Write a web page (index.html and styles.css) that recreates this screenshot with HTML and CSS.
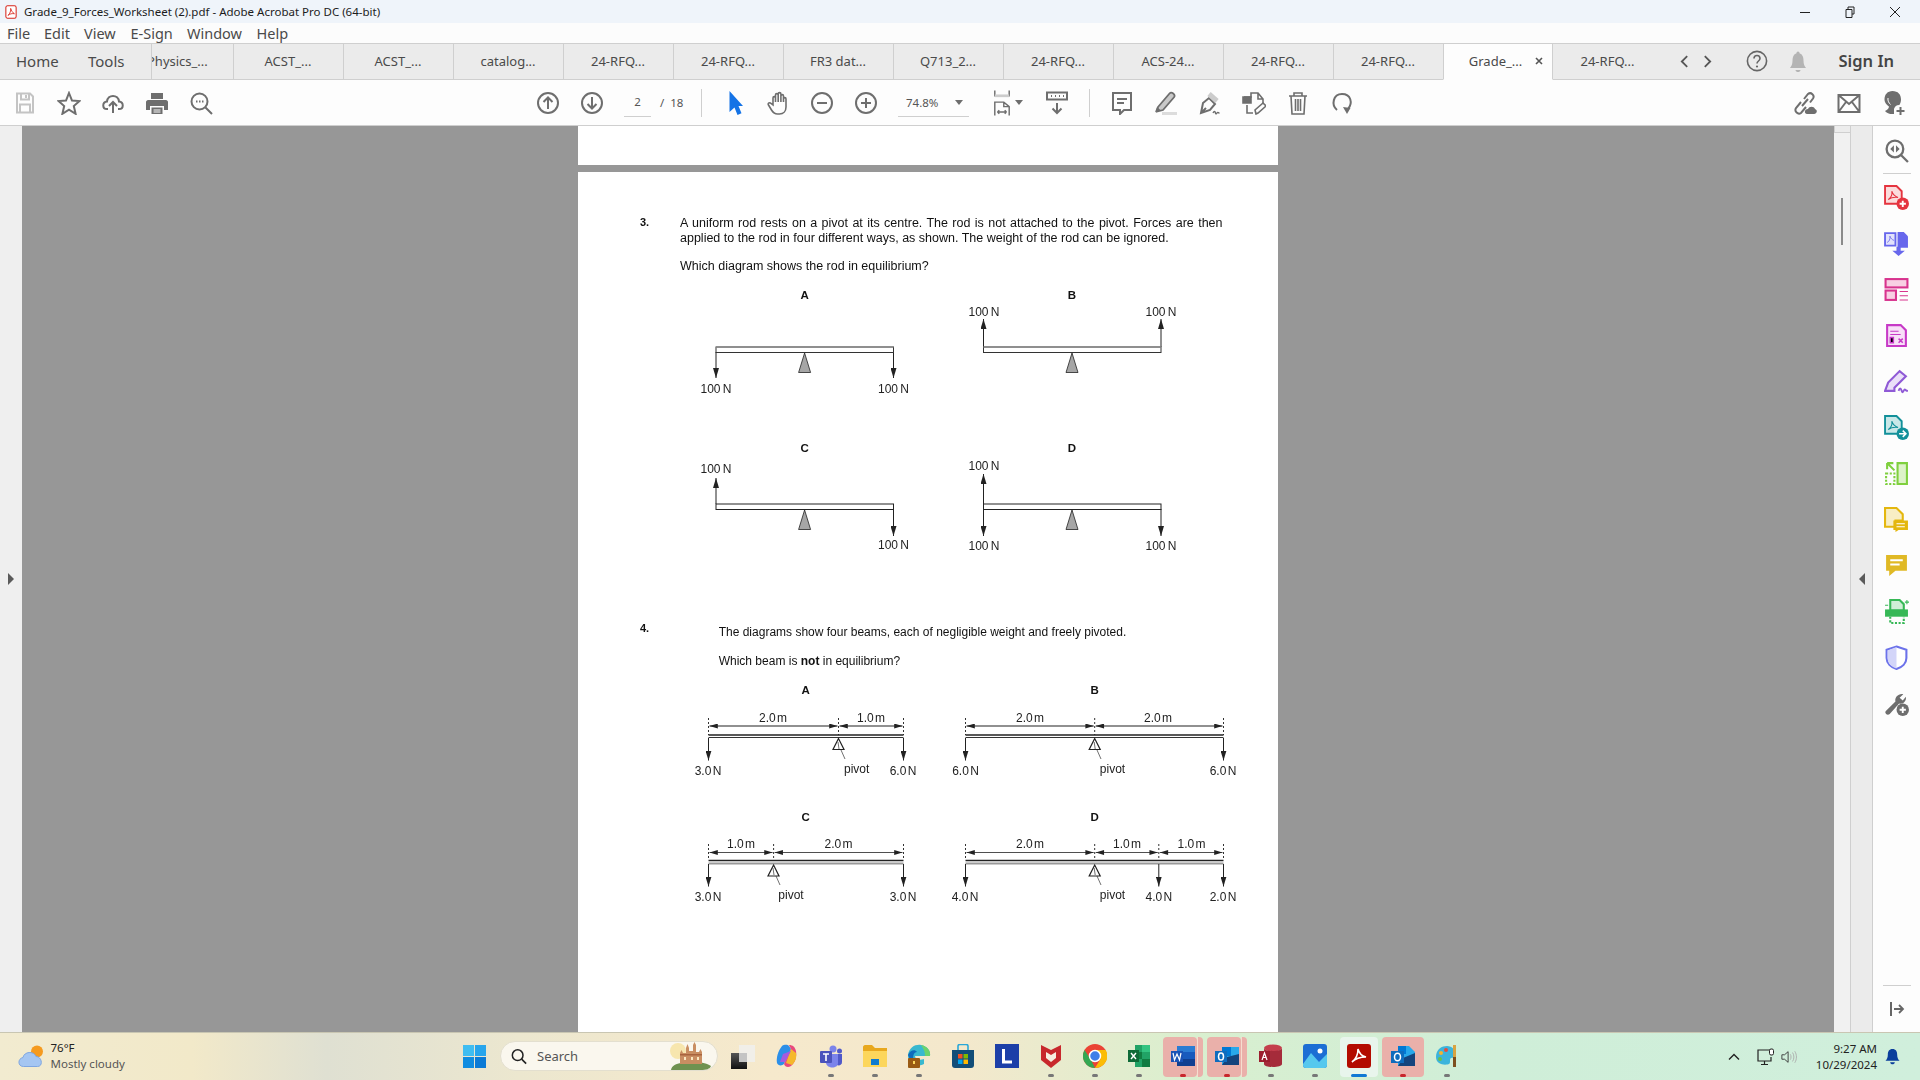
FILE: index.html
```html
<!DOCTYPE html>
<html lang="en">
<head>
<meta charset="utf-8">
<title>Grade_9_Forces_Worksheet (2).pdf - Adobe Acrobat Pro DC (64-bit)</title>
<link rel="stylesheet" href="styles.css">
</head>
<body>
<div class="shell">
  <header class="titlebar">
    <svg class="app-icon" viewBox="0 0 14 16"><rect x="1" y=".8" width="12" height="14.4" rx="2" fill="#fff" stroke="#d8261c" stroke-width="1.2"/><path d="M3.5 12C6 10 7 6 6.6 3.8 7.4 6.5 9 9 11 10 8.5 9.6 5.5 10 3.5 12z" fill="none" stroke="#d8261c"/></svg>
    <span class="title-text">Grade_9_Forces_Worksheet (2).pdf - Adobe Acrobat Pro DC (64-bit)</span>
    <div class="win-controls">
      <svg class="win-btn" viewBox="0 0 12 12"><path d="M1 6.500h10" stroke="#222" fill="none"/></svg>
      <svg class="win-btn" viewBox="0 0 12 12"><path d="M2 3.500h6v8H2zM4 3.500V1h6v7H8" stroke="#222" fill="none"/></svg>
      <svg class="win-btn" viewBox="0 0 12 12"><path d="M1 1l10 10M11 1L1 11" stroke="#222" fill="none"/></svg>
    </div>
  </header>
  <nav class="menubar">
    <span class="menu-item m-file">File</span><span class="menu-item m-edit">Edit</span><span class="menu-item m-view">View</span><span class="menu-item m-esign">E-Sign</span><span class="menu-item m-window">Window</span><span class="menu-item m-help">Help</span>
  </nav>
  <div class="tabbar">
    <span class="home-link">Home</span>
    <span class="tools-link">Tools</span>
    <div class="tab tab-clipped"><span>Physics_...</span></div>
    <div class="tab">ACST_...</div>
    <div class="tab">ACST_...</div>
    <div class="tab">catalog...</div>
    <div class="tab">24-RFQ...</div>
    <div class="tab">24-RFQ...</div>
    <div class="tab">FR3 dat...</div>
    <div class="tab">Q713_2...</div>
    <div class="tab">24-RFQ...</div>
    <div class="tab">ACS-24...</div>
    <div class="tab">24-RFQ...</div>
    <div class="tab">24-RFQ...</div>
    <div class="tab tab-active"><span>Grade_...</span><svg class="tab-x" viewBox="0 0 8 8"><path d="M1 1l6 6M7 1L1 7" stroke="#555" stroke-width="1.6" fill="none"/></svg></div>
    <div class="tab">24-RFQ...</div>
    <svg class="tab-nav tn-prev" viewBox="0 0 10 14"><path d="M8 1L2 7l6 6" stroke="#555" stroke-width="2" fill="none"/></svg>
    <svg class="tab-nav tn-next" viewBox="0 0 10 14"><path d="M2 1l6 6-6 6" stroke="#555" stroke-width="2" fill="none"/></svg>
    <svg class="help-icon" viewBox="0 0 22 22"><circle cx="11" cy="11" r="9.6" fill="none" stroke="#666" stroke-width="1.6"/><path d="M8 8.500c0-4 6-4 6 0 0 2.500-3 2.500-3 5" fill="none" stroke="#666" stroke-width="1.6"/><circle cx="11" cy="16.500" r="1.100" fill="#666"/></svg>
    <svg class="bell-icon" viewBox="0 0 18 24"><path d="M9 1.500c1 0 1.500.8 1.500 1.800 3 1 4 3.700 4 7.200 0 4 1 5.500 2.500 7.500H1c1.500-2 2.500-3.500 2.500-7.500 0-3.500 1-6.200 4-7.200C7.500 2.300 8 1.500 9 1.500zM6.500 20h5c-.3 2.700-4.700 2.700-5 0z" fill="#b4b4b4"/></svg>
    <span class="signin">Sign In</span>
  </div>
  <div class="toolbar">
    <div class="tb-group g-file">
      <span class="tb-btn"><svg viewBox="0 0 24 24" class="ico ico-light"><path d="M4 2.500h13l3 3v16H4zM8 2.500v6h8v-6M13 4v3M7 21.500v-8h10v8"/></svg></span>
      <span class="tb-btn"><svg viewBox="0 0 24 24" class="ico"><path d="M12 2l3 7.500 7.500.6-5.700 5 1.800 7.700L12 18.600l-6.600 4.200 1.800-7.700-5.700-5L9 9.500z"/></svg></span>
      <span class="tb-btn"><svg viewBox="0 0 24 24" class="ico"><path d="M7 18H6C1 18 1 11 6 10.500 6.500 3 17.500 3 18 10.500c5 .5 5 7.500 0 7.500h-1M12 22V11M8 15l4-4 4 4"/></svg></span>
      <span class="tb-btn"><svg viewBox="0 0 24 24" class="ico-fill"><path d="M6 2h12v6H6zM3 9h18c1 0 2 1 2 2v8h-4v-4H5v4H1v-8c0-1 1-2 2-2zM6.500 16.500h11V23h-11zM8.500 18.500v1h7v-1zM8.500 20.500v1h7v-1z" fill-rule="evenodd"/></svg></span>
      <span class="tb-btn"><svg viewBox="0 0 24 24" class="ico"><circle cx="10.500" cy="10.500" r="8"/><path d="M16.500 16.500L23 23M7 10.500h1.500M10 10.500h1.500M13 10.500h1.500"/></svg></span>
    </div>
    <span class="tb-btn g-nav"><svg viewBox="0 0 24 24" class="ico"><circle cx="12" cy="12" r="10"/><path d="M12 18V6.500M7.500 11L12 6.500l4.500 4.500"/></svg></span>
    <span class="tb-btn"><svg viewBox="0 0 24 24" class="ico"><circle cx="12" cy="12" r="10"/><path d="M12 6v11.500M7.500 13l4.500 4.500 4.500-4.500"/></svg></span>
    <span class="page-input">2</span>
    <span class="page-total">/&nbsp;&nbsp;18</span>
    <span class="tb-sep sep-a"></span>
    <span class="tb-btn btn-after-sep"><svg viewBox="0 0 24 24"><path d="M6.500 0v21l5-4.500L14.500 24l4-1.700-3-7.300H20z" fill="#1473e6"/></svg></span>
    <span class="tb-btn"><svg viewBox="0 0 24 24" class="ico ico-thin"><path d="M6 14V7c0-1.800 2.500-1.800 2.500 0v4V4c0-1.800 2.700-1.800 2.700 0v7V3c0-1.800 2.700-1.800 2.700 0v8V5c0-1.800 2.600-1.800 2.600 0v6-3c0-1.800 2.500-1.800 2.500 0v8c0 4-2.500 7-6.500 7h-2c-3 0-4.500-1.500-6-4l-3-5c-1-1.800 1.200-3 2.500-1.500z"/></svg></span>
    <span class="tb-btn btn-minus"><svg viewBox="0 0 24 24" class="ico"><circle cx="12" cy="12" r="10"/><path d="M7 12h10"/></svg></span>
    <span class="tb-btn"><svg viewBox="0 0 24 24" class="ico"><circle cx="12" cy="12" r="10"/><path d="M7 12h10M12 7v10"/></svg></span>
    <div class="zoom-select"><span>74.8%</span><i class="caret"></i></div>
    <div class="fit-btn"><svg viewBox="0 0 20 28" class="ico ico-thin"><path d="M2 0v6h16V0"/><path d="M2 6h16" stroke="#ccc" stroke-width="3"/><path d="M2 28V13h10l6 5v10M12 13v5h6M5 24h10M5 24l2-2M5 24l2 2M15 24l-2-2M15 24l-2 2"/></svg><i class="caret"></i></div>
    <span class="tb-btn btn-dl"><svg viewBox="0 0 24 24" class="ico"><path d="M2 1.500h20v7H2zM12 12v10M7.500 17.500L12 22l4.500-4.500"/><path d="M6 5h1M10 5h1M14 5h1M18 5h1"/></svg></span>
    <span class="tb-sep sep-b"></span>
    <span class="tb-btn btn-comment"><svg viewBox="0 0 24 24" class="ico"><path d="M3 2h18v17h-7l-4 4v-4H3zM7 8h10M7 12h7"/></svg></span>
    <span class="tb-btn"><svg viewBox="0 0 24 24"><path d="M4 16L15.500 2.500c2-2.300 6.500 1 4.500 3.800L9 19l-6 1.500z" fill="#c9c9c9" stroke="#6e6e6e" stroke-width="1.800"/><path d="M3 16l-2 5 6-1.500z" fill="#6e6e6e"/><path d="M8 21h15v3H8z" fill="#dcdcdc"/></svg></span>
    <span class="tb-btn"><svg viewBox="0 0 24 24" class="ico"><path d="M3 22l2-10 6-5 6 6-5 6zM3 22l5-5"/><path d="M11 3l8 7" stroke="#ccc" stroke-width="5"/><path d="M15 22c1-2 2-2 2.500 0s1.500 0 2-.5 1 .5 2 .5" stroke-width="1.400"/></svg></span>
    <span class="tb-btn"><svg viewBox="0 0 24 24" class="ico ico-thin"><path d="M2 6h7V2h7l5 6v4M16 2v6h5M5 14v8h6"/><path d="M14 23l-1-4 8-7 3 3-8 7z"/><path d="M1 6h8v6H1z" fill="#6e6e6e"/></svg></span>
    <span class="tb-btn"><svg viewBox="0 0 24 24" class="ico ico-thin"><path d="M3 5h18M8 5V2h8v3M5 5l1 18h12l1-18M9.500 8v12M12 8v12M14.500 8v12"/></svg></span>
    <span class="tb-btn"><svg viewBox="0 0 24 24" class="ico"><path d="M7 19C1 14 3 3 12 3s11 9 6 15"/><path d="M13 16l7.500 1-3.500 6z" fill="#6e6e6e" stroke="none"/></svg></span>
    <div class="tb-group g-right">
      <span class="tb-btn"><svg viewBox="0 0 24 24" class="ico"><path d="M11 8l4-5c3-2.500 7 1.500 5 4.500l-3 4M13 16l-5 6c-3 2-7-1.500-5-5l5-6M9 15l6-7"/><path d="M14 23c-3 0-3-5 1-5 1-3 6-3 7 0 3 1 2 5-1 5z" fill="#6e6e6e" stroke="none"/></svg></span>
      <span class="tb-btn"><svg viewBox="0 0 24 24" class="ico"><path d="M1.500 4h21v17h-21zM1.500 4L12 13 22.500 4M1.500 21L9 11M22.500 21L15 11"/></svg></span>
      <span class="tb-btn"><svg viewBox="0 0 24 24"><path d="M11.500 0C17 0 20 3.500 20 8.500c0 2-.6 4-1.600 5.500-2.400-.2-4.900 1.500-5.400 4v5c-3.500.5-7.500-.8-9-3 1.800-1 4-2.500 4-4.500C6 14 3.500 12 3.500 8.500 3.500 3.500 6.500 0 11.500 0z" fill="#6e6e6e"/><path d="M7 7c-.5 3 1 5 2.500 6.500" stroke="#fff" fill="none"/><path d="M19.500 16v8M15.500 20h8" stroke="#6e6e6e" stroke-width="2"/></svg></span>
    </div>
  </div>

  <div class="workspace">
    <aside class="left-rail"><i class="tri tri-right"></i></aside>
    <main class="viewer">
      <div class="page page-prev"></div>
      <article class="page page-cur">
        <div class="q-head q3">
          <span class="q-num">3.</span>
          <div class="q-body">
            <p class="justified">A uniform rod rests on a pivot at its centre. The rod is not attached to the pivot. Forces are then applied to the rod in four different ways, as shown. The weight of the rod can be ignored.</p>
            <p>Which diagram shows the rod in equilibrium?</p>
          </div>
        </div>
        <svg class="fig fig3" viewBox="578 285 700 270">
          <defs>
            <marker id="ah" viewBox="0 0 10 6" refX="10" refY="3" markerWidth="10" markerHeight="6" orient="auto" markerUnits="userSpaceOnUse"><path d="M0 0L10 3 0 6z" fill="#222"/></marker>
            <marker id="dh" viewBox="0 0 10 6" refX="10" refY="3" markerWidth="10" markerHeight="5" orient="auto-start-reverse" markerUnits="userSpaceOnUse"><path d="M0 0L10 3 0 6z" fill="#222"/></marker>
          </defs>
          <text class="lb" x="804.600" y="299">A</text>
          <text class="lb" x="1072" y="299">B</text>
          <text class="lb" x="804.600" y="452">C</text>
          <text class="lb" x="1072" y="452">D</text>

          <line class="fa" x1="716" y1="352" x2="716" y2="378"/><line class="fa" x1="893.500" y1="352" x2="893.500" y2="378"/>
          <rect class="rod" x="716" y="347" width="177.500" height="5.500"/><path class="rod-top" d="M716 347h177.500"/>
          <polygon class="wedge" points="804.600,353 798.600,372.500 810.600,372.500"/>
          <text class="tx" x="716" y="392.500">100 N</text><text class="tx" x="893.500" y="392.500">100 N</text>

          <line class="fa" x1="983.500" y1="347" x2="983.500" y2="319"/><line class="fa" x1="1161" y1="347" x2="1161" y2="319"/>
          <rect class="rod" x="983.500" y="347" width="177.500" height="5.500"/><path class="rod-top" d="M983.500 347h177.500"/>
          <polygon class="wedge" points="1072,353 1066,372.500 1078,372.500"/>
          <text class="tx" x="984" y="315.500">100 N</text><text class="tx" x="1161" y="315.500">100 N</text>

          <line class="fa" x1="716" y1="504" x2="716" y2="478"/><line class="fa" x1="893.500" y1="509" x2="893.500" y2="536"/>
          <rect class="rod rod-dark" x="716" y="504" width="177.500" height="5.500"/>
          <polygon class="wedge" points="804.600,510 798.600,529.500 810.600,529.500"/>
          <text class="tx" x="716" y="473">100 N</text><text class="tx" x="893.500" y="549">100 N</text>

          <line class="fa" x1="983.500" y1="504" x2="983.500" y2="474"/><line class="fa" x1="983.500" y1="509" x2="983.500" y2="536"/><line class="fa" x1="1161" y1="509" x2="1161" y2="536"/>
          <rect class="rod rod-dark" x="983.500" y="504" width="177.500" height="5.500"/>
          <polygon class="wedge" points="1072,510 1066,529.500 1078,529.500"/>
          <text class="tx" x="984" y="470">100 N</text><text class="tx" x="984" y="549.500">100 N</text><text class="tx" x="1161" y="549.500">100 N</text>
        </svg>

        <div class="q-head q4">
          <span class="q-num">4.</span>
          <div class="q-body">
            <p>The diagrams show four beams, each of negligible weight and freely pivoted.</p>
            <p>Which beam is <b>not</b> in equilibrium?</p>
          </div>
        </div>
        <svg class="fig fig4" viewBox="578 685 700 220">
          <text class="lb" x="805.700" y="694">A</text><text class="lb" x="1094.700" y="694">B</text>
          <text class="lb" x="805.700" y="820.500">C</text><text class="lb" x="1094.700" y="820.500">D</text>

          <path class="dots" d="M708.500 718v17M838.500 718v17M903.500 718v17"/>
          <line class="dim" x1="709.500" y1="726" x2="837.500" y2="726"/><line class="dim" x1="839.500" y1="726" x2="902.500" y2="726"/>
          <text class="tx tx-m" x="773" y="721.500">2.0 m</text><text class="tx tx-m" x="871" y="721.500">1.0 m</text>
          <path class="bm" d="M708.500 735h195"/><path class="bm2" d="M708.500 737.500h195"/>
          <line class="fa" x1="708.500" y1="738" x2="708.500" y2="760.500"/><line class="fa" x1="903.500" y1="738" x2="903.500" y2="760.500"/>
          <polygon class="tri-w" points="838.500,738.500 833,749.500 844,749.500"/><path class="thin" d="M838 742l1 7M841 750l4 9"/>
          <text class="tx tx-m" x="708" y="774.500">3.0 N</text><text class="tx" x="856.700" y="773">pivot</text><text class="tx tx-m" x="903" y="774.500">6.0 N</text>

          <path class="dots" d="M965.500 718v17M1094.700 718v17M1223.500 718v17"/>
          <line class="dim" x1="966.500" y1="726" x2="1093.700" y2="726"/><line class="dim" x1="1095.700" y1="726" x2="1222.500" y2="726"/>
          <text class="tx tx-m" x="1030" y="721.500">2.0 m</text><text class="tx tx-m" x="1158" y="721.500">2.0 m</text>
          <path class="bm" d="M965.500 735h258"/><path class="bm2" d="M965.500 737.500h258"/>
          <line class="fa" x1="965.500" y1="738" x2="965.500" y2="760.500"/><line class="fa" x1="1223.500" y1="738" x2="1223.500" y2="760.500"/>
          <polygon class="tri-w" points="1094.700,738.500 1089.200,749.500 1100.200,749.500"/><path class="thin" d="M1094.200 742l1 7M1097 750l4 9"/>
          <text class="tx tx-m" x="965.500" y="774.500">6.0 N</text><text class="tx" x="1112.500" y="773">pivot</text><text class="tx tx-m" x="1223" y="774.500">6.0 N</text>

          <path class="dots" d="M708.500 844v16M773.600 844v16M903.500 844v16"/>
          <line class="dim dim-thin" x1="709.500" y1="852.500" x2="772.600" y2="852.500"/><line class="dim dim-thin" x1="774.600" y1="852.500" x2="902.500" y2="852.500"/>
          <text class="tx tx-m" x="741" y="848">1.0 m</text><text class="tx tx-m" x="838.500" y="848">2.0 m</text>
          <path class="bm" d="M708.500 860.500h195"/><path class="bm3" d="M708.500 863.500h195"/>
          <line class="fa" x1="708.500" y1="864" x2="708.500" y2="886.500"/><line class="fa" x1="903.500" y1="864" x2="903.500" y2="886.500"/>
          <polygon class="tri-w" points="773.600,865 768,876 779,876"/><path class="thin" d="M773 868l1 7M776 876l4 9"/>
          <text class="tx tx-m" x="708" y="900.500">3.0 N</text><text class="tx" x="791" y="899">pivot</text><text class="tx tx-m" x="903" y="900.500">3.0 N</text>

          <path class="dots" d="M965.500 844v16M1094.700 844v16M1158.800 844v16M1223.500 844v16"/>
          <line class="dim dim-thin" x1="966.500" y1="852.500" x2="1093.700" y2="852.500"/><line class="dim dim-thin" x1="1095.700" y1="852.500" x2="1157.800" y2="852.500"/><line class="dim dim-thin" x1="1159.800" y1="852.500" x2="1222.500" y2="852.500"/>
          <text class="tx tx-m" x="1030" y="848">2.0 m</text><text class="tx tx-m" x="1127" y="848">1.0 m</text><text class="tx tx-m" x="1191.600" y="848">1.0 m</text>
          <path class="bm" d="M965.500 860.500h258"/><path class="bm3" d="M965.500 863.500h258"/>
          <line class="fa" x1="965.500" y1="864" x2="965.500" y2="886.500"/><line class="fa" x1="1158.800" y1="864" x2="1158.800" y2="886.500"/><line class="fa" x1="1223.500" y1="864" x2="1223.500" y2="886.500"/>
          <polygon class="tri-w" points="1094.700,865 1089.200,876 1100.200,876"/><path class="thin" d="M1094.200 868l1 7M1097 876l4 9"/>
          <text class="tx tx-m" x="965" y="900.500">4.0 N</text><text class="tx" x="1112.500" y="899">pivot</text><text class="tx tx-m" x="1158.800" y="900.500">4.0 N</text><text class="tx tx-m" x="1223" y="900.500">2.0 N</text>
        </svg>
      </article>
    </main>
    <div class="scroll-col"><span class="scroll-cap"></span><span class="scroll-thumb"></span></div>
    <div class="collapse-col"><i class="tri tri-left"></i></div>
    <aside class="tools-rail">
      <span class="tool"><svg viewBox="0 0 24 24" fill="none" stroke="#6e6e6e" stroke-width="2.200"><circle cx="10.500" cy="10.500" r="8"/><path d="M16.500 16.500L23 23"/><path d="M9.500 7v7L6 10.500zM11.500 7v7L15 10.500z" fill="#6e6e6e" stroke="none"/></svg></span>
      <span class="rail-line"></span>
      <span class="tool"><svg viewBox="0 0 24 24"><path d="M1 1h11l5 5v12H1z" fill="#fbdcdc" stroke="#e5343f" stroke-width="1.800"/><path d="M4 14c3-2 4-5 3.500-8 1 3 3 5 6 6-3-.5-6.500 0-9.500 2z" fill="none" stroke="#e5343f"/><circle cx="18" cy="18" r="6" fill="#e5343f"/><path d="M18 15v6M15 18h6" stroke="#fff" stroke-width="1.800"/></svg></span>
      <span class="tool"><svg viewBox="0 0 24 24"><path d="M1 2h10v12H1z" fill="#e2e2fb" stroke="#6767ec" stroke-width="1.800"/><path d="M3 11c2-1 3-3 2.700-6 .8 2 2 3.500 4 4" fill="none" stroke="#6767ec" stroke-width=".8"/><path d="M13 1h6l4 4v11H13z" fill="#6767ec"/><path d="M12 15v4H8l6 5 6-5h-4v-4z" fill="#6767ec"/></svg></span>
      <span class="tool"><svg viewBox="0 0 24 24"><rect x="1.500" y="2" width="21" height="8" fill="#f8cfe3" stroke="#d8348e" stroke-width="2"/><rect x="1.500" y="13" width="10" height="9" fill="#f8cfe3" stroke="#d8348e" stroke-width="2"/><path d="M15 14h8M15 18h8M15 22h8" stroke="#d8348e"/></svg></span>
      <span class="tool"><svg viewBox="0 0 24 24"><path d="M3 2h13l5 5v15H3z" fill="#f8e0f8" stroke="#c73ac7" stroke-width="2"/><path d="M6 8h8M6 11h10" stroke="#c73ac7"/><path d="M6 14h3v5H6zM14 15l4 4M18 15l-4 4" stroke="#c73ac7" stroke-width="1.400"/></svg></span>
      <span class="tool"><svg viewBox="0 0 24 24"><path d="M1 21l3-8L15 2l6 5-11 11v3z" fill="#eadff8" stroke="#8f5ad6" stroke-width="2"/><path d="M14 21c1-3 2-3 3 0s1.500 0 2.500-1 1 1 3.500 1" fill="none" stroke="#8f5ad6" stroke-width="1.800"/></svg></span>
      <span class="tool"><svg viewBox="0 0 24 24"><path d="M1 1h11l5 5v12H1z" fill="#c9e8e8" stroke="#12909a" stroke-width="1.800"/><path d="M4 14c3-2 4-5 3.500-8 1 3 3 5 6 6-3-.5-6.500 0-9.500 2z" fill="none" stroke="#12909a"/><circle cx="18" cy="18" r="6" fill="#12909a"/><path d="M14.500 18h6M18 15l3 3-3 3" stroke="#fff" stroke-width="1.500" fill="none"/></svg></span>
      <span class="tool"><svg viewBox="0 0 24 24"><path d="M13 2h9v20h-9z" fill="#ddf3c8" stroke="#7fd03e" stroke-width="2"/><path d="M2 12h8v10H2z" fill="none" stroke="#7fd03e" stroke-width="2" stroke-dasharray="2 1.500"/><path d="M10 9l-7-7M3 2v6M3 2h6" stroke="#7fd03e" stroke-width="2"/></svg></span>
      <span class="tool"><svg viewBox="0 0 24 24"><path d="M1 1h11l6 6v6h-7v6H1z" fill="#f8eec4" stroke="#e4b70e" stroke-width="2"/><path d="M9 13h14v9h-9l-3 2v-2H9z" fill="#e4b70e"/><path d="M12 16h8M12 19h8" stroke="#fff"/></svg></span>
      <span class="tool"><svg viewBox="0 0 24 24"><path d="M2 2h20v15H11l-6 5v-5H2z" fill="#e0b925"/><path d="M6 7h12M6 11h9" stroke="#fff" stroke-width="1.800"/></svg></span>
      <span class="tool"><svg viewBox="0 0 24 24"><path d="M6 1h9l4 4v6H6z" fill="#cfeed6" stroke="#36b856" stroke-width="2"/><path d="M1 10h22v7H1z" fill="#36b856"/><path d="M6 17v6h13v-6" fill="none" stroke="#36b856" stroke-width="2" stroke-dasharray="2 1.500"/><path d="M20 3h4M22 1v4M1 6h3" stroke="#36b856"/></svg></span>
      <span class="tool"><svg viewBox="0 0 24 24"><path d="M12 1.500l9.500 3v8c0 5-4 9-9.500 10.500C6.500 21.500 2.500 17.500 2.500 12.500v-8z" fill="#fff" stroke="#6c72ea" stroke-width="2"/><path d="M12 2v20.500C6.500 21 3.500 17.500 3.500 12.500v-7.300z" fill="#d3d5f9"/></svg></span>
      <span class="tool"><svg viewBox="0 0 24 24"><path d="M2 22c-1-1-1-2 0-3l9-9c-1-4 3-8 7.500-7L15 6.500 18 9l3-3.500c.8 4-2.500 7.500-6.500 6.500l-9 10c-1 1-2.500 1-3.500 0z" fill="#6e6e6e"/><circle cx="18" cy="18" r="6" fill="#6e6e6e"/><path d="M18 15v6M15 18h6" stroke="#fff" stroke-width="1.800"/></svg></span>
      <span class="rail-line rail-line-end"></span>
      <span class="tool tool-small"><svg viewBox="0 0 16 16"><path d="M2 1v14" stroke="#666" stroke-width="2"/><path d="M5 8h9M10 4l4 4-4 4" stroke="#666" stroke-width="1.800" fill="none"/></svg></span>
    </aside>
  </div>

  <footer class="taskbar">
    <div class="weather">
      <svg class="weather-icon" viewBox="0 0 26 22"><circle cx="19" cy="6.500" r="6" fill="#f59a1f"/><path d="M5.500 21.500c-6 0-6-8-.5-9 1-6 11-7 13-1 6 0 7.500 10 1.500 10z" fill="#a5c6f2" stroke="#7fa6e0"/></svg>
      <div class="weather-text"><span class="w-temp">76°F</span><span class="w-desc">Mostly cloudy</span></div>
    </div>
    <svg class="start" viewBox="0 0 23 23"><rect width="11" height="11" fill="#3fbdf1"/><rect x="12" width="11" height="11" fill="#27a5ec"/><rect y="12" width="11" height="11" fill="#0f8ce0"/><rect x="12" y="12" width="11" height="11" fill="#0a7ad6"/></svg>
    <div class="searchbox">
      <svg class="search-glass" viewBox="0 0 18 18"><circle cx="7.500" cy="7.500" r="6" fill="none" stroke="#222" stroke-width="1.700"/><path d="M12 12l5 5" stroke="#222" stroke-width="1.800"/></svg>
      <span class="search-text">Search</span>
      <svg class="castle" viewBox="0 0 42 30"><circle cx="8" cy="10" r="8" fill="#f7e6ae"/><path d="M1 29c1-6 9-8 15-6 6-3 20-2 25 2-1 3-5 4-10 4z" fill="#6f9250"/><path d="M10 23V12l1.500-3 1.500 3h3V7l1.500-4L19 7v3h4V4l1.500-3L26 4v7h3l1.500-3 1.500 3v12z" fill="#c98e62"/><path d="M10 13h22v1.500H10z" fill="#a8643e"/><path d="M14 16h2v3h-2zM21 16h2v3h-2zM27 16h2v3h-2z" fill="#fbe7c0"/></svg>
    </div>
    <svg class="taskview" viewBox="0 0 24 24"><defs><linearGradient id="tv" x1="0" y1="0" x2="0" y2="1"><stop offset="0" stop-color="#555"/><stop offset="1" stop-color="#111"/></linearGradient></defs><rect x="8" width="16" height="17" fill="#f1efe9"/><rect y="8" width="16" height="16" fill="url(#tv)"/><rect x="8" y="8" width="8" height="9" fill="#c4c4c4"/></svg>
    <div class="apps">
      <div class="app"><svg viewBox="0 0 24 24"><path d="M7 2c3-2 6-1 7 0l2 3-7 15c-2 2-6 2-7-1-1-5 1-12 5-17z" fill="#2c8fe8"/><path d="M14 1c4 0 6 2 7 6 1 6-1 12-5 15-3 2-6 1-7-2l7-15z" fill="#e8497c"/><path d="M16 5l5 4c1 5-1 9-4 12l-6-2z" fill="#f5b82c"/><path d="M8 10l8-3-6 11H5z" fill="#a35be0"/></svg></div>
      <div class="app"><svg viewBox="0 0 24 24"><circle cx="14" cy="5" r="3.500" fill="#7b83eb"/><circle cx="20.500" cy="7" r="2.500" fill="#5059c9"/><path d="M16 10h7v8c0 3-3 4-5 3z" fill="#5059c9"/><path d="M7 10h12v9c0 6-11 6-12 0z" fill="#7b83eb"/><rect x="1" y="7" width="12" height="12" rx="1" fill="#4b53bc"/><path d="M4 10h6M7 10v7" stroke="#fff" stroke-width="1.600"/></svg><i class="dot"></i></div>
      <div class="app"><svg viewBox="0 0 24 24"><path d="M0 3c0-1 1-2 2-2h7l3 3h12v19H0z" fill="#e8a81e"/><path d="M0 7h24v16H0z" fill="#fcd65c"/><path d="M8 15h8v6H8z" fill="#0f7bd0"/></svg><i class="dot"></i></div>
      <div class="app"><svg viewBox="0 0 24 24"><path d="M1 11C2 3 9 0 14 1c6 1 10 6 9 11H8c0 3 4 5 9 3v5c-8 4-16 1-16-9z" fill="#39b8cf"/><path d="M14 1c6 1 10 6 9 11h-5c0-5-2-8-4-11z" fill="#6cd36c"/><path d="M1 11c2-5 7-6 9-3-3 0-5 4-3 10-3-1-5-4-6-7z" fill="#0f6cbd"/><rect x="1" y="14" width="12" height="10" rx="1" fill="#9a5b14"/><rect x="6" y="17" width="2" height="3" fill="#fcd65c"/></svg><i class="dot"></i></div>
      <div class="app"><svg viewBox="0 0 24 24"><path d="M7 6V2c0-1 1-1.500 2-1.500h6c1 0 2 .5 2 1.500v4" fill="none" stroke="#2aa7d8" stroke-width="1.600"/><path d="M1 6h22v15c0 2-1 3-3 3H4c-2 0-3-1-3-3z" fill="#124d78"/><rect x="7" y="10" width="4.500" height="4.500" fill="#f25022"/><rect x="12.500" y="10" width="4.500" height="4.500" fill="#7fba00"/><rect x="7" y="15.500" width="4.500" height="4.500" fill="#00a4ef"/><rect x="12.500" y="15.500" width="4.500" height="4.500" fill="#ffb900"/></svg></div>
      <div class="app"><svg viewBox="0 0 24 24"><rect width="24" height="24" fill="#1c3fa8"/><path d="M8.500 5v13H17" fill="none" stroke="#fff" stroke-width="3"/></svg></div>
      <div class="app"><svg viewBox="0 0 24 24"><path d="M2 1l10 5 10-5v15l-10 8-10-8z" fill="#c8282c"/><path d="M7 8l5 3 5-3v6l-5 4-5-4z" fill="#f6eee0"/></svg><i class="dot"></i></div>
      <div class="app"><svg viewBox="0 0 24 24"><circle cx="12" cy="12" r="12" fill="#ea4335"/><path d="M12 24A12 12 0 0 1 1.600 6L8 16z" fill="#34a853"/><path d="M12 6h10.600A12 12 0 0 1 12 24l5.500-9z" fill="#fbbc05"/><circle cx="12" cy="12" r="5.500" fill="#3f7fe8" stroke="#fff" stroke-width="1.500"/></svg><i class="dot"></i></div>
      <div class="app"><svg viewBox="0 0 24 24"><path d="M8 1h15v22H8z" fill="#21a366"/><path d="M15 1h8v7h-8z" fill="#33c481"/><path d="M15 15h8v8h-8z" fill="#107c41"/><path d="M8 8h7v7H8z" fill="#107c41"/><rect x="1" y="6" width="11" height="12" fill="#0e6a37"/><path d="M4 9l5 6M9 9l-5 6" stroke="#fff" stroke-width="1.400"/></svg><i class="dot"></i></div>
      <div class="app app-alert"><span class="stack"></span><svg viewBox="0 0 24 24"><path d="M6 2h18v20H6z" fill="#2b7cd3"/><path d="M6 8h18v7H6z" fill="#185abd"/><path d="M6 15h18v7H6z" fill="#103f91"/><rect y="7" width="12" height="11" fill="#1a52b5"/><path d="M2 9l1.500 7L6 10l2.500 6L10 9" fill="none" stroke="#fff" stroke-width="1.200"/></svg><i class="dot dot-red"></i></div>
      <div class="app app-alert"><span class="stack"></span><svg viewBox="0 0 24 24"><path d="M7 3h17v18H7z" fill="#28a8ea"/><path d="M7 3h9v9H7z" fill="#0078d4"/><path d="M12 13l12-3v11H7z" fill="#14447d"/><rect y="7" width="12" height="11" fill="#0f6cbd"/><ellipse cx="6" cy="12.500" rx="2.500" ry="3.500" fill="none" stroke="#fff" stroke-width="1.500"/></svg><i class="dot dot-red"></i></div>
      <div class="app"><svg viewBox="0 0 24 24"><ellipse cx="14" cy="4" rx="9" ry="3.500" fill="#c43e4c"/><path d="M5 4v16c0 4 18 4 18 0V4c0 4-18 4-18 0z" fill="#a52b3a"/><rect y="7" width="11" height="11" fill="#9c1e2e"/><path d="M3 16l2.500-7L8 16M4 13.500h3" fill="none" stroke="#fff" stroke-width="1.200"/></svg><i class="dot"></i></div>
      <div class="app"><svg viewBox="0 0 24 24"><path d="M3 0h18c2 0 3 1 3 3v18c0 2-1 3-3 3H3c-2 0-3-1-3-3V3c0-2 1-3 3-3z" fill="#1c6ed4"/><path d="M0 20L8 9l8 9 8-8v11c0 2-1 3-3 3H3c-2 0-3-1-3-3z" fill="#56c8ee"/><circle cx="17" cy="7" r="2.500" fill="#fff"/></svg><i class="dot"></i></div>
      <div class="app app-active"><svg viewBox="0 0 24 24"><rect width="24" height="24" rx="3" fill="#b30b00"/><path d="M5 18c4-3 6-8 6-13 1 4 4 7 8 8-4 0-10 1-14 5z" fill="none" stroke="#fff" stroke-width="1.600"/></svg><i class="dot dot-blue"></i></div>
      <div class="app app-alert app-o2"><svg viewBox="0 0 24 24"><path d="M7 2h11l6 6v14H7z" fill="#28a8ea"/><path d="M7 2h8v8H7z" fill="#0078d4"/><path d="M12 14l12-5v13H7z" fill="#14447d"/><rect y="7" width="13" height="12" fill="#0f6cbd"/><ellipse cx="6.500" cy="13" rx="3" ry="3.800" fill="none" stroke="#fff" stroke-width="1.500"/></svg><i class="dot dot-red"></i></div>
      <div class="app"><svg viewBox="0 0 24 24"><path d="M1 13C1 5 7 2 12 2s9 4 9 9c0 4-3 2-5 3s0 5-2 6-13 2-13-7z" fill="#3cb4dc"/><circle cx="6" cy="9" r="2" fill="#f2b233"/><circle cx="11" cy="6" r="2" fill="#e74c3c"/><circle cx="5" cy="15" r="2" fill="#6cc04a"/><path d="M19.500 1v12" stroke="#d9a441" stroke-width="3"/><path d="M19.500 13v10" stroke="#7d4f1f" stroke-width="3"/></svg><i class="dot"></i></div>
    </div>
    <div class="tray">
      <svg class="tray-chev" viewBox="0 0 12 8"><path d="M1 6.500L6 1.500l5 5" fill="none" stroke="#222" stroke-width="1.400"/></svg>
      <svg class="tray-net" viewBox="0 0 18 18"><path d="M14 2H1v11h13v-4M7.500 13v3M4 16.500h7" fill="none" stroke="#222" stroke-width="1.200"/><rect x="12.500" y="1" width="4" height="6" rx="1.500" fill="#fff" stroke="#222"/></svg>
      <svg class="tray-vol" viewBox="0 0 18 18"><path d="M1 6.500h3L8 3v12l-4-3.500H1z" fill="none" stroke="#333"/><path d="M10.500 6c1 1.500 1 4.500 0 6M13 4c2 3 2 7 0 10M15.500 2.500c2.500 4 2.500 9 0 13" fill="none" stroke="#aaa"/></svg>
      <div class="clock"><span>9:27 AM</span><span>10/29/2024</span></div>
      <svg class="tray-bell" viewBox="0 0 16 18"><path d="M8 1c3.500 0 5 2.500 5 6 0 3 1 5 2.500 6.500H.5C2 12 3 10 3 7c0-3.500 1.500-6 5-6zM5.500 15h5c-.4 3-4.600 3-5 0z" fill="#0a3e9c"/></svg>
    </div>
  </footer>
</div>
</body>
</html>
```
FILE: styles.css
```css
* { box-sizing: border-box; }
html, body { margin: 0; height: 100%; overflow: hidden; }
body { font-family: "Noto Sans", "Open Sans", sans-serif; color: #444; }
.shell { width: 1920px; height: 1080px; display: flex; flex-direction: column; overflow: hidden; }

/* Title + menu */
.titlebar { height: 23px; background: #eff4fa; display: flex; align-items: center; padding-left: 5px; flex: none; }
.app-icon { width: 12px; height: 14px; flex: none; }
.title-text { margin-left: 7px; font-size: 11.5px; color: #1c1c1c; white-space: nowrap; }
.win-controls { margin-left: auto; display: flex; margin-right: 19px; gap: 33px; }
.win-btn { width: 12px; height: 12px; }
.menubar { height: 20px; background: #fcfcfc; display: flex; align-items: center; padding-left: 7px; flex: none; font-size: 14.5px; color: #4a4a4a; }
.menu-item { display: block; flex: none; }
.m-file { width: 37px; }
.m-edit { width: 40px; }
.m-view { width: 46.500px; }
.m-esign { width: 56.500px; }
.m-window { width: 69.500px; }

/* Tabs */
.tabbar { height: 37px; flex: none; background: #ebebeb; border-top: 1px solid #cfcfcf; border-bottom: 1px solid #cfcfcf; display: flex; align-items: center; font-size: 13px; color: #4a4a4a; }
.home-link { margin-left: 16px; width: 72px; font-size: 15px; margin-bottom: 2px; }
.tools-link { width: 63px; font-size: 15px; margin-bottom: 2px; }
.tab { width: 110px; height: 36px; margin-bottom: -1px; padding-bottom: 2px; flex: none; display: flex; align-items: center; justify-content: center; border-left: 1px solid #cfcfcf; white-space: nowrap; }
.tab-clipped { width: 81.5px; justify-content: flex-start; overflow: hidden; }
.tab-clipped span { margin-left: -5px; }
.tab-active { background: #fdfdfd; border-left: 1px solid #cfcfcf; border-right: 1px solid #cfcfcf; border-bottom: 1px solid #fdfdfd; padding-left: 17px; position: relative; z-index: 1; }
.tab-x { width: 8px; height: 8px; margin-left: 13px; }
.tab-active + .tab { border-left: 0; }
.tab-nav { width: 9px; height: 13px; flex: none; margin-bottom: 1px; }
.tn-prev { margin-left: 17px; }
.tn-next { margin-left: 14px; }
.help-icon { width: 22px; height: 22px; margin-left: 34px; flex: none; margin-bottom: 1px; }
.bell-icon { width: 18px; height: 24px; margin-left: 21px; flex: none; }
.signin { margin-left: 32px; font-size: 16.500px; font-weight: 600; color: #444; white-space: nowrap; margin-bottom: 2px; }

/* Toolbar */
.toolbar { height: 46px; flex: none; background: #fdfdfd; border-bottom: 1px solid #cfcfcf; display: flex; align-items: center; padding-left: 3px; padding-right: 5px; }
.tb-group { display: flex; align-items: center; }
.tb-btn { width: 44px; height: 44px; flex: none; display: flex; align-items: center; justify-content: center; }
.tb-btn svg { width: 24px; height: 24px; }
.ico { fill: none; stroke: #6e6e6e; stroke-width: 2; }
.ico-thin { stroke-width: 1.600; }
.ico-light { stroke: #c4c4c4; }
.ico-fill { fill: #6e6e6e; }
.g-nav { margin-left: 303px; }
.page-input { width: 27px; margin-left: 10px; height: 28px; line-height: 26px; text-align: center; font-size: 11.5px; border-bottom: 1px solid #cfcfcf; color: #555; }
.page-total { margin-left: 9px; width: 21px; font-size: 11.5px; color: #555; white-space: nowrap; }
.tb-sep { width: 1px; height: 28px; background: #cfcfcf; flex: none; }
.sep-a { margin-left: 20px; }
.btn-after-sep { margin-left: 11px; }
.btn-minus { margin-left: -1px; }
.zoom-select { width: 71px; height: 28px; margin-left: 10px; border-bottom: 1px solid #cfcfcf; display: flex; align-items: center; padding-left: 8px; font-size: 11.5px; color: #555; }
.zoom-select .caret { margin-left: 17px; }
.caret { width: 0; height: 0; border-left: 4px solid transparent; border-right: 4px solid transparent; border-top: 5px solid #6e6e6e; display: block; flex: none; }
.fit-btn { width: 36px; margin-left: 24px; display: flex; align-items: center; }
.fit-btn svg { width: 18px; height: 30px; }
.fit-btn .caret { margin-left: 4px; }
.btn-dl { margin-left: 6px; }
.sep-b { margin-left: 10px; }
.btn-comment { margin-left: 10px; }
.g-right { margin-left: auto; }

/* Workspace */
.workspace { flex: 1; display: flex; min-height: 0; }
.left-rail { width: 22px; flex: none; background: #efefef; display: flex; align-items: center; justify-content: center; }
.tri { display: block; width: 0; height: 0; border-top: 6px solid transparent; border-bottom: 6px solid transparent; }
.tri-right { border-left: 6px solid #5a5a5a; }
.tri-left { border-right: 6px solid #5a5a5a; }
.viewer { width: 1812px; flex: none; background: #979797; overflow: hidden; display: flex; flex-direction: column; align-items: center; }
.page { width: 700px; background: #fff; flex: none; }
.page-prev { height: 39px; margin-bottom: 7px; }
.page-cur { flex: 1; font-family: "Liberation Sans", Arial, sans-serif; font-size: 12px; line-height: 15px; color: #111; filter: blur(.3px); }
.q-head { display: flex; padding-left: 62px; }
.q3 { margin-top: 44px; font-size: 12.500px; }
.q4 { margin-top: 70px; }
.q-num { width: 40px; flex: none; font-weight: 700; font-size: 11px; margin-top: -1px; }
.q4 .q-num { width: 78.700px; margin-top: -4px; }
.q-body { width: 542.500px; }
.q4 .q-body { width: 500px; }
.q-body p { margin: 0 0 13px; }
.q-body .justified { text-align: justify; }
.q4 .q-body p { margin-bottom: 14px; }
.q4 .q-body p:last-child, .q3 .q-body p:last-child { margin-bottom: 0; }
.fig { display: block; width: 700px; }
.fig3 { height: 270px; margin-top: 10.500px; }
.fig4 { height: 220px; margin-top: 16px; }
.lb { font: 700 11.500px "Liberation Sans", Arial, sans-serif; text-anchor: middle; fill: #111; }
.tx { font: 12px "Liberation Sans", Arial, sans-serif; text-anchor: middle; fill: #222; word-spacing: -1px; }
.tx-m { word-spacing: -2px; }
.fa { stroke: #222; stroke-width: 1; marker-end: url(#ah); }
.rod { fill: #fff; stroke: #333; stroke-width: 1; }
.rod-top { stroke: #8c8c8c; stroke-width: 1.600; fill: none; }
.rod-dark { stroke: #222; }
.wedge { fill: #a6a6a6; stroke: #222; stroke-width: .8; }
.tri-w { fill: #fff; stroke: #222; stroke-width: 1.200; }
.dots { stroke: #333; stroke-width: 1; stroke-dasharray: 2 2; fill: none; }
.dim { stroke: #222; stroke-width: 1.200; marker-start: url(#dh); marker-end: url(#dh); }
.dim-thin { stroke-width: .8; }
.bm { stroke: #222; stroke-width: 1.500; fill: none; }
.bm2 { stroke: #333; stroke-width: 1; fill: none; }
.bm3 { stroke: #999; stroke-width: 2; fill: none; }
.thin { stroke: #333; stroke-width: .7; fill: none; }

.scroll-col { width: 17px; flex: none; background: #f1f1f1; border-right: 1px solid #cfcfcf; display: flex; flex-direction: column; align-items: center; }
.scroll-cap { width: 17px; height: 7px; background: #ececec; border: 1px solid #cfcfcf; border-top: 0; flex: none; }
.scroll-thumb { width: 2px; height: 47px; margin-top: 65px; background: #8a8a8a; flex: none; }
.collapse-col { width: 22px; flex: none; background: #ebebeb; border-right: 1px solid #cfcfcf; display: flex; align-items: center; justify-content: center; }
.tools-rail { width: 47px; flex: none; background: #fdfdfd; display: flex; flex-direction: column; align-items: center; padding-top: 1px; }
.tool { height: 46px; width: 47px; flex: none; display: flex; align-items: center; justify-content: center; }
.tool svg { width: 25px; height: 25px; }
.tool-small svg { width: 16px; height: 16px; }
.rail-line { width: 28px; height: 1px; background: #cfcfcf; flex: none; }
.rail-line-end { margin-top: auto; }

/* Taskbar */
.taskbar { height: 48px; flex: none; border-top: 1px solid #c9c6b2; background: linear-gradient(90deg, #f2ebd0 0%, #f2e9c9 10%, #dfe0d2 17%, #ece7cf 27%, #f6e9cc 40%, #f4e8cc 50%, #d9efcf 62%, #cfeed8 78%, #d0efdc 100%); display: flex; align-items: center; }
.weather { display: flex; align-items: center; margin-left: 18px; width: 437px; flex: none; margin-top: -2px; }
.weather-icon { width: 26px; height: 22px; flex: none; }
.weather-text { margin-left: 6.500px; display: flex; flex-direction: column; font-size: 12px; line-height: 16px; }
.w-temp { color: #222; font-size: 11.5px; }
.w-desc { color: #555; font-size: 11.5px; }
.start { width: 23px; height: 23px; flex: none; margin-left: 8px; }
.searchbox { width: 218px; height: 30px; margin-left: 14px; flex: none; border-radius: 15px; background: #faf7ee; border: 1px solid #e3dfcf; display: flex; align-items: center; padding-left: 10px; margin-top: -1px; }
.search-glass { width: 16px; height: 17px; flex: none; }
.search-text { margin-left: 10px; font-size: 13px; color: #555; }
.castle { width: 42px; height: 30px; margin-left: auto; margin-right: 5px; }
.taskview { width: 24px; height: 24px; margin-left: 13px; flex: none; }
.apps { display: flex; margin-left: 10px; flex: none; }
.app { width: 44px; height: 48px; position: relative; display: flex; align-items: center; justify-content: center; flex: none; padding-bottom: 1px; }
.app svg { width: 24px; height: 24px; position: relative; }
.dot { position: absolute; left: 19px; bottom: 4px; width: 6px; height: 3px; border-radius: 2px; background: #777; }
.dot-red { background: #c8262c; }
.dot-blue { background: #0f78d4; width: 16px; left: 14px; }
.app-alert::before { content: ""; position: absolute; top: 4px; bottom: 4px; left: 2px; right: 8px; background: #eab0aa; border-radius: 4px; }
.app-o2::before { left: 1px; right: 1px; }
.stack { position: absolute; top: 4px; bottom: 4px; right: 2px; width: 6px; background: #eab0aa; border-radius: 0 4px 4px 0; border-left: 1px solid #f6ddd0; }
.app-active::before { content: ""; position: absolute; top: 4px; bottom: 4px; left: 3px; right: 3px; background: #e8f5ec; border-radius: 4px; }
.tray { margin-left: auto; display: flex; align-items: center; flex: none; padding-right: 20px; }
.tray-chev { width: 12px; height: 8px; }
.tray-net { width: 18px; height: 18px; margin-left: 17px; }
.tray-vol { width: 16px; height: 16px; margin-left: 6px; }
.clock { width: 76px; margin-left: 4px; text-align: right; display: flex; flex-direction: column; font-size: 11.5px; line-height: 16px; color: #222; }
.tray-bell { width: 15px; height: 17px; margin-left: 8px; }
```
